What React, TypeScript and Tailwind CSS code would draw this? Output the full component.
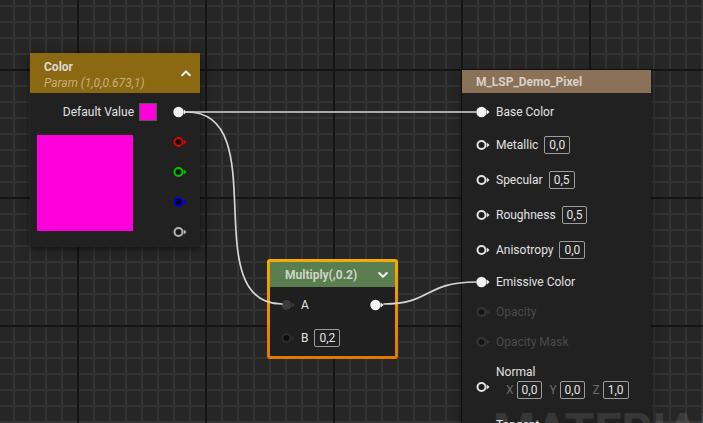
import React from "react";

type PinProps = { ring: string; fill: string; tri?: string; r?: number };

function Pin({ ring, fill, tri, r = 4 }: PinProps) {
  return (
    <svg width="14" height="12" viewBox="0 0 14 12" className="shrink-0 block">
      <circle cx="5.5" cy="6" r={r} fill={fill} stroke={ring} strokeWidth="2" />
      <path d="M10.8 3.6 L13.6 6 L10.8 8.4 Z" fill={tri ?? ring} />
    </svg>
  );
}

const WhitePin = () => <Pin ring="#f2f2f2" fill="#f2f2f2" r={4.2} />;
const RingPin = () => <Pin ring="#e2e2e2" fill="#1c1c1c" />;
const DisabledPin = () => <Pin ring="#363636" fill="#141414" />;

function Chevron({ up }: { up?: boolean }) {
  return (
    <svg width="10" height="8" viewBox="0 0 10 8" className="block">
      <polyline
        points={up ? "1.2,6.2 5,2.4 8.8,6.2" : "1.2,2 5,5.8 8.8,2"}
        fill="none"
        stroke="#f0f0f0"
        strokeWidth="2"
        strokeLinecap="round"
        strokeLinejoin="round"
      />
    </svg>
  );
}

function ValBox({ v }: { v: string }) {
  return (
    <span className="inline-flex h-[18px] items-center rounded-[2px] border border-[#9c9c9c] px-[4px] text-[12px] leading-none text-[#e4e4e4]">
      {v}
    </span>
  );
}

function Grid() {
  const xs = Array.from({ length: 45 }, (_, i) => 13 + 16 * i);
  const ys = Array.from({ length: 28 }, (_, i) => 5 + 16 * i);
  return (
    <svg width="703" height="423" className="absolute inset-0 block">
      <rect width="703" height="423" fill="#262626" />
      {xs.map((x) => (
        <rect key={"x" + x} x={x} y={0} width={2} height={423} fill="#333333" />
      ))}
      {ys.map((y) => (
        <rect key={"y" + y} x={0} y={y} width={703} height={2} fill="#333333" />
      ))}
      {xs
        .filter((x) => (x - 77) % 128 === 0)
        .map((x) => (
          <rect key={"mx" + x} x={x} y={0} width={2} height={423} fill="#141414" />
        ))}
      {ys
        .filter((y) => (y - 69) % 128 === 0)
        .map((y) => (
          <rect key={"my" + y} x={0} y={y} width={703} height={2} fill="#141414" />
        ))}
    </svg>
  );
}

function Wires() {
  return (
    <svg width="703" height="423" className="absolute inset-0 block pointer-events-none">
      <g fill="none" stroke="#d6d6d6" strokeWidth="1.7" strokeLinecap="round">
        <path d="M187 112 L476 112" />
        <path d="M187 112 C 275 112, 195 304, 282 304" />
        <path d="M384 304 C 432 304, 424 282, 476 282" />
      </g>
    </svg>
  );
}

function MatRow({ label, box, disabled, filled, h = 30 }: { label: string; box?: string; disabled?: boolean; filled?: boolean; h?: number }) {
  return (
    <div className={`flex items-center gap-[6px] ${h === 35 ? "h-[35px]" : "h-[30px]"}`}>
      {disabled ? <DisabledPin /> : filled ? <WhitePin /> : <RingPin />}
      <span className={`text-[12px] leading-none ${disabled ? "text-[#4a4a4a]" : "text-[#e2e2e2]"}`}>{label}</span>
      {box && <ValBox v={box} />}
    </div>
  );
}

function VecRow({ label, vals }: { label: string; vals: [string, string, string] }) {
  return (
    <div className="flex h-[53px] items-start gap-[6px] pt-[7px]">
      <div className="self-center">
        <RingPin />
      </div>
      <div className="flex flex-col">
        <span className="h-[16px] text-[12px] leading-[16px] text-[#e2e2e2]">{label}</span>
        <div className="mt-[1px] flex items-center pl-[10px]">
          {(["X", "Y", "Z"] as const).map((a, i) => (
            <div key={a} className={`flex items-center gap-[3px] ${i > 0 ? "ml-[7px]" : ""}`}>
              <span className="text-[12px] leading-none text-[#6c6c6c]">{a}</span>
              <ValBox v={vals[i]} />
            </div>
          ))}
        </div>
      </div>
    </div>
  );
}

export default function App() {
  return (
    <div className="relative h-[423px] w-[703px] overflow-hidden bg-[#262626] font-['Roboto',sans-serif]">
      <Grid />

      {/* Color parameter node */}
      <div className="absolute left-[30px] top-[53px] w-[170px] shadow-[0_2px_8px_rgba(0,0,0,0.55)]">
        <div className="flex h-[40px] items-center justify-between bg-[#8a6912] pl-[14px] pr-[9px]">
          <div className="flex flex-col pt-[3px]">
            <span className="text-[12px] font-bold leading-[16px] text-[#dedad0]">Color</span>
            <span className="text-[12px] italic leading-[16px] text-[#c6b07a]">Param (1,0,0.673,1)</span>
          </div>
          <Chevron up />
        </div>
        <div className="flex h-[154px] bg-[#212121] pt-[4px]">
          <div className="flex w-[127px] flex-col pl-[7px]">
            <div className="flex h-[30px] items-center justify-end gap-[5px]">
              <span className="text-[12px] leading-none text-[#e2e2e2]">Default Value</span>
              <span className="h-[18px] w-[18px] border border-[#5a5a5a] bg-[#ff00dc]" />
            </div>
            <div className="mt-[8px] h-[96px] w-[96px] bg-[#ff00dc]" />
          </div>
          <div className="ml-[16px] flex flex-col">
            <div className="flex h-[30px] items-center"><WhitePin /></div>
            <div className="flex h-[30px] items-center"><Pin ring="#e00000" fill="#160000" /></div>
            <div className="flex h-[30px] items-center"><Pin ring="#00c800" fill="#001600" /></div>
            <div className="flex h-[30px] items-center"><Pin ring="#0000d8" fill="#000016" /></div>
            <div className="flex h-[30px] items-center"><Pin ring="#b4b4b4" fill="#1a1a1a" /></div>
          </div>
        </div>
      </div>

      {/* Multiply node (selected) */}
      <div className="absolute left-[267px] top-[259px] h-[100px] w-[131px] rounded-[3px] bg-[linear-gradient(180deg,#f3ad00,#e07800)] p-[3px]">
        <div className="flex h-full flex-col bg-[#1f1f1f]">
          <div className="flex h-[25px] items-center justify-between bg-[#5a7e50] pl-[15px] pr-[7px]">
            <span className="text-[12px] font-bold leading-none text-[#ccd5c6]">Multiply(,0.2)</span>
            <Chevron />
          </div>
          <div className="flex flex-col gap-[3px] px-[11px] pt-[3px]">
            <div className="flex h-[30px] items-center justify-between">
              <div className="flex items-center gap-[6px]">
                <Pin ring="#3c3c3c" fill="#3c3c3c" tri="#3c3c3c" />
                <span className="text-[12px] leading-none text-[#e2e2e2]">A</span>
              </div>
              <WhitePin />
            </div>
            <div className="flex h-[30px] items-center gap-[6px]">
              <Pin ring="#2e2e2e" fill="#0c0c0c" tri="#2e2e2e" />
              <span className="text-[12px] leading-none text-[#e2e2e2]">B</span>
              <ValBox v="0,2" />
            </div>
          </div>
        </div>
      </div>

      {/* Material result node */}
      <div className="absolute left-[462px] top-[70px] h-[400px] w-[189px] bg-[#212121] shadow-[0_2px_8px_rgba(0,0,0,0.5)]">
        <div className="flex h-[23px] items-center bg-[#8b7158] pl-[14px]">
          <span className="text-[12px] font-bold leading-none text-[#d8d0c8]">M_LSP_Demo_Pixel</span>
        </div>
        <div className="flex flex-col pl-[14px] pt-[4px]">
          <MatRow label="Base Color" filled />
          <MatRow label="Metallic" box="0,0" h={35} />
          <MatRow label="Specular" box="0,5" h={35} />
          <MatRow label="Roughness" box="0,5" h={35} />
          <MatRow label="Anisotropy" box="0,0" h={35} />
          <MatRow label="Emissive Color" filled />
          <MatRow label="Opacity" disabled />
          <MatRow label="Opacity Mask" disabled />
          <VecRow label="Normal" vals={["0,0", "0,0", "1,0"]} />
          <VecRow label="Tangent" vals={["1,0", "0,0", "0,0"]} />
        </div>
      </div>

      <Wires />

      <div className="pointer-events-none absolute left-[493px] top-[407px] whitespace-nowrap text-[48px] font-bold leading-none text-white/10">
        MATERIAL
      </div>
    </div>
  );
}
